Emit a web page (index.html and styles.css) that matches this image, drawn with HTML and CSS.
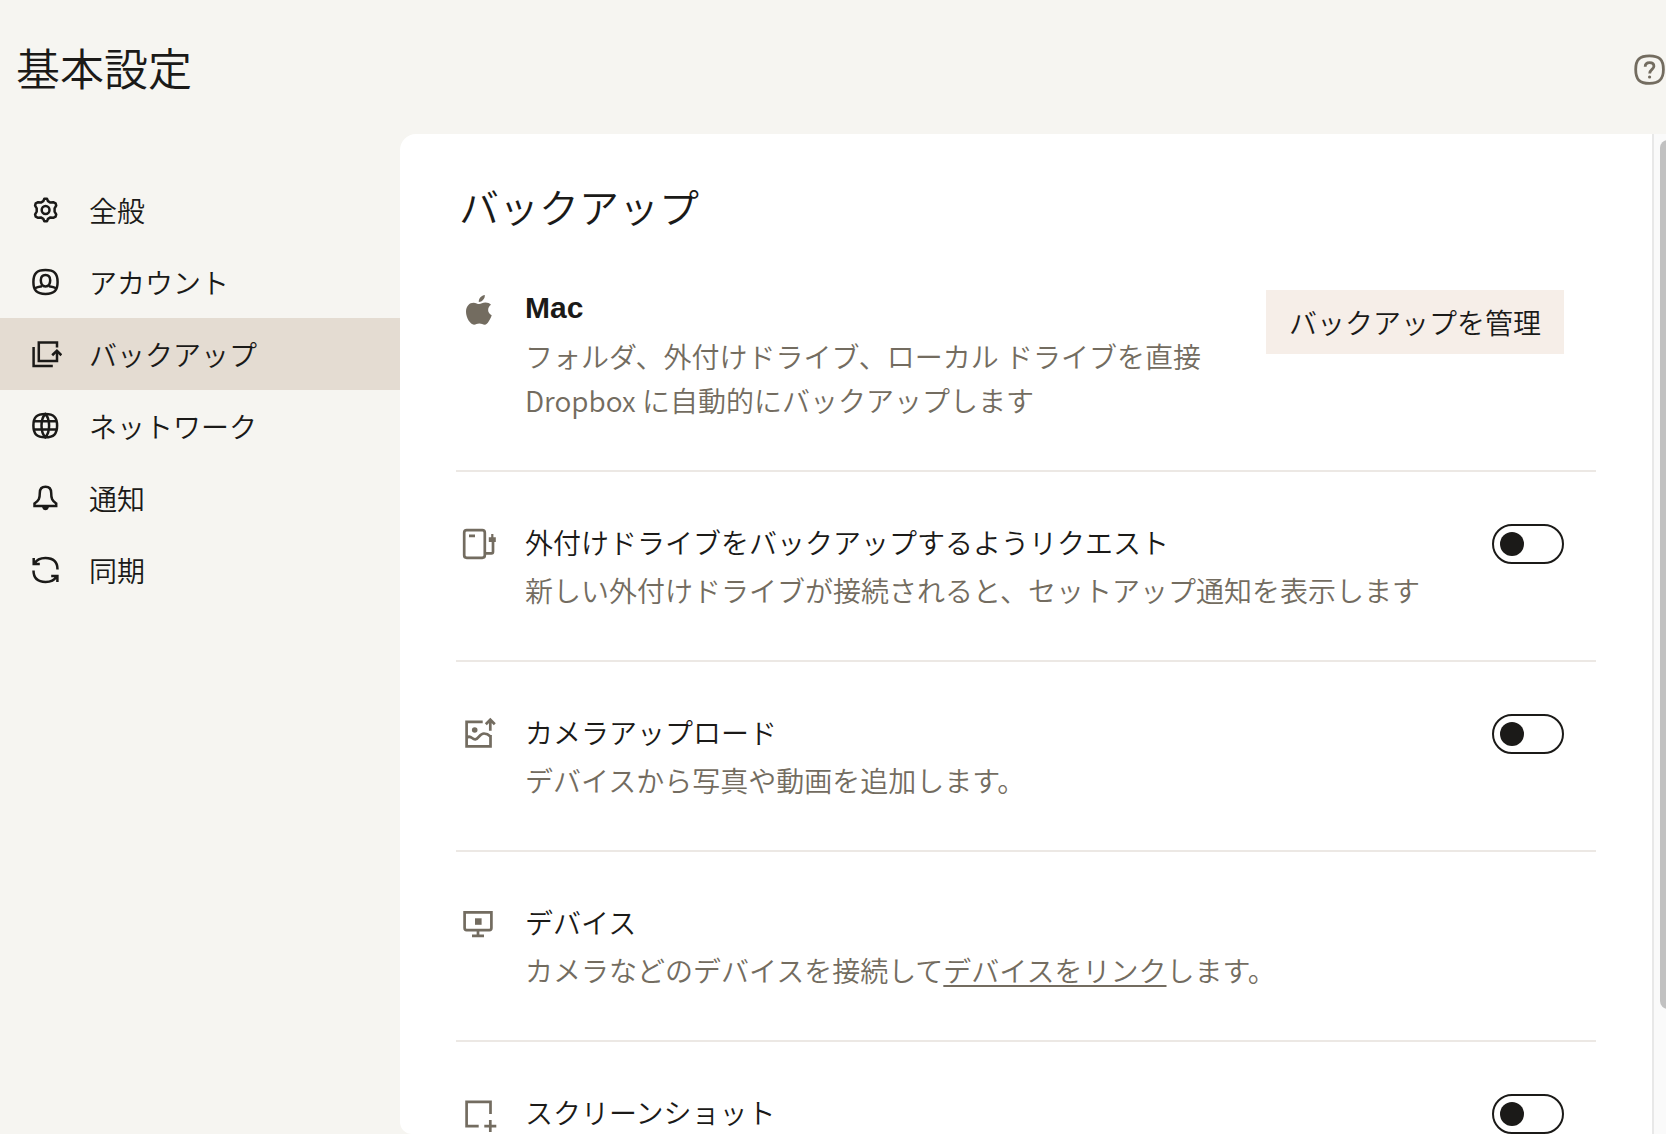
FILE: index.html
```
<!DOCTYPE html>
<html lang="ja">
<head>
    <meta charset="UTF-8">
    <meta name="viewport" content="width=device-width, initial-scale=1.0">
    <title>基本設定</title>
    <link rel="stylesheet" href="styles.css">
</head>
<body>
    <header class="header">
        <h1>基本設定</h1>
        <button class="help" type="button" aria-label="ヘルプ">
            <svg viewBox="0 0 32 32" fill="none" stroke="currentColor" stroke-width="2.8">
                <path d="M15.5 1.9C25.5 1.9 29.4 5.800 29.400 15.500S25.500 29.400 15.500 29.400 1.700 25.500 1.700 15.500 5.500 1.900 15.500 1.900Z"/>
                <path d="M11.200 12.700C11.200 9.900 12.900 8.600 15.600 8.600S19.900 10.100 19.900 12.300C19.900 15.500 15.700 15.400 15.700 19.600"/>
                <circle cx="15.600" cy="23" r="1.600" fill="currentColor" stroke="none"/>
            </svg>
        </button>
    </header>

    <div class="layout">
        <nav class="sidebar">
            <a href="#general">
                <svg viewBox="0 0 32 32">
                    <path d="M13.300 7.200 14.300 4.800H17L18 7.200 20.400 8.600 23.200 8.200 25.600 9.400 26.200 11.600 24.600 14.300V17.700L26.200 20.400 25.600 22.600 23.200 23.800 20.400 23.400 18 24.800 17 27.200H14.300L13.300 24.800 10.900 23.400 8.100 23.800 5.700 22.600 5.100 20.400 6.700 17.700V14.300L5.100 11.600 5.700 9.400 8.100 8.200 10.900 8.600Z" stroke-linejoin="round"/>
                    <circle cx="15.600" cy="16" r="3.900"/>
                </svg>
                全般
            </a>
            <a href="#account">
                <svg viewBox="0 0 32 32">
                    <path d="M15.500 4.100C24.300 4.100 27.600 7.500 27.600 16S24.300 27.900 15.500 27.900 3.400 24.500 3.400 16 6.700 4.100 15.500 4.100Z"/>
                    <path d="M15.500 9C18.500 9 20.200 10.800 20.200 14.300S18.500 20.400 15.500 20.400 10.800 17.800 10.800 14.300 12.500 9 15.500 9Z"/>
                    <path d="M4.300 22.500C7 20.900 9.400 20.500 12 20.200M19 20.200C21.600 20.500 24 20.900 26.700 22.500"/>
                </svg>
                アカウント
            </a>
            <a href="#backup" class="active" aria-current="page">
                <svg viewBox="0 0 32 32">
                    <path d="M27 9.500V4.500H8.800V22.900H27V13"/>
                    <path d="M3.600 9V28H22.800"/>
                    <path d="M22.200 17.200 26.900 12.800 31.400 17.200" stroke-width="2.600"/>
                </svg>
                バックアップ
            </a>
            <a href="#network">
                <svg viewBox="0 0 32 32">
                    <path d="M15.300 4.100C24 4.100 27.100 7.400 27.100 15.600S24 27.300 15.300 27.300 3.400 24 3.400 15.600 6.600 4.100 15.300 4.100Z"/>
                    <path d="M15.300 4.100C12.300 7 11.500 10.500 11.500 15.600S12.300 24.400 15.300 27.300C18.300 24.400 19.100 20.700 19.100 15.600S18.300 7 15.300 4.100ZM3.800 11.200H26.800M3.800 19.400H26.800"/>
                </svg>
                ネットワーク
            </a>
            <a href="#notice">
                <svg viewBox="0 0 32 32">
                    <path d="M9.800 11C9.800 6.700 11.800 4.800 15.500 4.800S21.200 6.700 21.200 11C21.200 16.500 22 18.600 26.200 21.500V23.900H4.500V21.500C8.900 18.600 9.800 16.500 9.800 11Z"/>
                    <path d="M12 24.500H19C18.600 27 17.300 28.200 15.500 28.200S12.400 27 12 24.500Z" fill="currentColor" stroke="none"/>
                </svg>
                通知
            </a>
            <a href="#sync">
                <svg viewBox="0 0 32 32">
                    <path d="M3.700 4V10H9.800M4.500 9.700C6.500 6 10 4.100 15.400 4.100 23.500 4.100 27.500 7.600 27.500 15.500M27.400 28V22H21.200M26.600 22.300C24.500 26 21 27.900 15.600 27.900 7.500 27.900 3.500 24.500 3.500 16.500"/>
                </svg>
                同期
            </a>
        </nav>

        <main class="panel">
            <h2>バックアップ</h2>

            <section class="row">
                <svg class="row-icon" viewBox="0 0 40 40">
                    <path fill="currentColor" stroke="none" d="M24.800 5C25.200 8.700 21.900 12.100 18.800 12 18.500 8.500 21.500 5.400 24.800 5ZM31 14.800C27.100 17.300 27.100 23.200 31.700 25.300 30.500 29 27.500 34.700 24.800 34.700 22.700 34.700 21.700 33.500 19.300 33.500S16 34.700 14 34.700C10.300 34.700 6 27.600 6 21.800 6 16 9.500 12.700 13.500 12.700 16 12.700 17.500 14.100 19.200 14.100 20.800 14.100 22.700 12.600 25.500 12.600 27.600 12.600 29.700 13.400 31 14.800Z"/>
                </svg>
                <div class="row-text">
                    <h3 class="device">Mac</h3>
                    <p>フォルダ、外付けドライブ、ローカル ドライブを直接 Dropbox に自動的にバックアップします</p>
                </div>
                <button class="manage" type="button">バックアップを管理</button>
            </section>

            <section class="row">
                <svg class="row-icon" viewBox="0 0 40 40">
                    <rect x="4.200" y="6.200" width="20.600" height="27.600" rx="2.500"/>
                    <path d="M9 11.800H15M25 29.300H31.500Q33 29.300 33 27.800V17"/>
                    <path d="M31.200 10H33.400V13.300H35.800V18H28.800V13.300H31.200Z" fill="currentColor" stroke="none"/>
                </svg>
                <div class="row-text">
                    <h3><label for="drive">外付けドライブをバックアップするようリクエスト</label></h3>
                    <p>新しい外付けドライブが接続されると、セットアップ通知を表示します</p>
                </div>
                <input class="toggle" type="checkbox" id="drive">
            </section>

            <section class="row">
                <svg class="row-icon" viewBox="0 0 40 40">
                    <path d="M22.700 7.900H6.600V32.400H30.500V21M30.300 16.700V6M25.800 10.200 30.300 5.700 34.800 10.200"/>
                    <path d="M6.600 23.600C11 20.500 12 25.600 15.300 25.300 19 25 19.200 19.500 24 19.500 27 19.500 28.500 20.500 30.500 22.500"/>
                    <circle cx="14.700" cy="16" r="2.800" fill="currentColor" stroke="none"/>
                </svg>
                <div class="row-text">
                    <h3><label for="camera">カメラアップロード</label></h3>
                    <p>デバイスから写真や動画を追加します。</p>
                </div>
                <input class="toggle" type="checkbox" id="camera">
            </section>

            <section class="row">
                <svg class="row-icon" viewBox="0 0 40 40">
                    <path d="M4.600 8.300H31.400V24.100Q31.400 26.100 29.400 26.100H6.600Q4.600 26.100 4.600 24.100ZM18 26V31M12 31.800H24"/>
                    <path d="M15 14.300H21.600V20.800H15Z" fill="currentColor" stroke="none"/>
                </svg>
                <div class="row-text">
                    <h3>デバイス</h3>
                    <p>カメラなどのデバイスを接続して<a href="#link">デバイスをリンク</a>します。</p>
                </div>
            </section>

            <section class="row">
                <svg class="row-icon" viewBox="0 0 40 40">
                    <path d="M18.700 32.200H6.600V7.800H30.500V20M30.300 26V38M24.300 32.200H36.300"/>
                </svg>
                <div class="row-text">
                    <h3><label for="screenshot">スクリーンショット</label></h3>
                </div>
                <input class="toggle" type="checkbox" id="screenshot">
            </section>
        </main>

        <div class="scrollbar">
            <div class="thumb"></div>
        </div>
    </div>
</body>
</html>
```
FILE: styles.css
```
* {
    margin: 0;
    padding: 0;
    box-sizing: border-box;
}

body {
    display: flex;
    flex-direction: column;
    height: 100vh;
    overflow: hidden;
    background-color: #f6f5f1;
    color: #1b1a18;
    font-family: "Noto Sans CJK JP", sans-serif;
    font-size: 28px;
    font-weight: 350;
    line-height: 44px;
}

h1,
h2,
h3 {
    font-weight: 350;
}

button {
    border: none;
    font: inherit;
    color: inherit;
    cursor: pointer;
}

svg {
    flex: none;
    fill: none;
    stroke: currentColor;
}

/* Header */
.header {
    display: flex;
    justify-content: space-between;
    align-items: center;
    padding: 40px 0 34px 16px;
}

.header h1 {
    padding-bottom: 6px;
    font-size: 44px;
    line-height: 54px;
}

.help {
    width: 32px;
    height: 32px;
    background: none;
    color: #736c60;
}

.help svg {
    display: block;
}

.layout {
    display: flex;
    flex: 1;
    min-height: 0;
}

/* Sidebar */
.sidebar {
    flex: none;
    width: 400px;
    padding-top: 40px;
}

.sidebar a {
    display: flex;
    align-items: center;
    gap: 27px;
    height: 72px;
    padding-left: 30px;
    color: inherit;
    text-decoration: none;
}

.sidebar a.active {
    background-color: #e4dcd2;
}

.sidebar svg {
    width: 32px;
    height: 32px;
    stroke-width: 2.5;
}

/* Settings panel */
.panel {
    flex: 1;
    min-width: 0;
    padding: 42px 56px 0;
    overflow: hidden;
    background-color: #fff;
    border-radius: 16px 0 0 12px;
}

.panel h2 {
    padding: 0 0 2px 3px;
    font-size: 40px;
    line-height: 60px;
}

.row {
    display: flex;
    align-items: flex-start;
    padding: 48px 32px 48px 4px;
    border-bottom: 2px solid #ece8e4;
}

.row-icon {
    width: 40px;
    height: 40px;
    margin: 4px 25px 0 0;
    color: #736c60;
    stroke-width: 2.7;
}

.row-text {
    flex: 1;
}

.row h3 {
    margin-bottom: 4px;
    font-size: 28px;
}

.row h3.device {
    font-family: "Liberation Sans", sans-serif;
    font-size: 30px;
    font-weight: 700;
}

.row p {
    color: #736c60;
}

.row p a {
    color: inherit;
    text-decoration-thickness: 2px;
    text-underline-offset: 3px;
}

.manage {
    height: 64px;
    margin: 4px 0 0 24px;
    padding: 0 23px;
    background-color: #f6eee8;
}

.toggle {
    flex: none;
    appearance: none;
    width: 72px;
    height: 40px;
    margin-top: 4px;
    padding: 6px;
    border: 2px solid #1b1a18;
    border-radius: 20px;
    cursor: pointer;
}

.toggle::before {
    content: "";
    display: block;
    width: 24px;
    height: 24px;
    border-radius: 50%;
    background-color: #1b1a18;
}

.toggle:checked::before {
    margin-left: auto;
}

/* Scrollbar */
.scrollbar {
    flex: none;
    width: 14px;
    padding: 6px 0 0 6px;
    overflow: hidden;
    background-color: #fafafa;
    border-left: 2px solid #e8e8e8;
}

.thumb {
    width: 16px;
    height: calc(100% - 125px);
    border-radius: 8px;
    background-color: #c1c1c1;
}
```
